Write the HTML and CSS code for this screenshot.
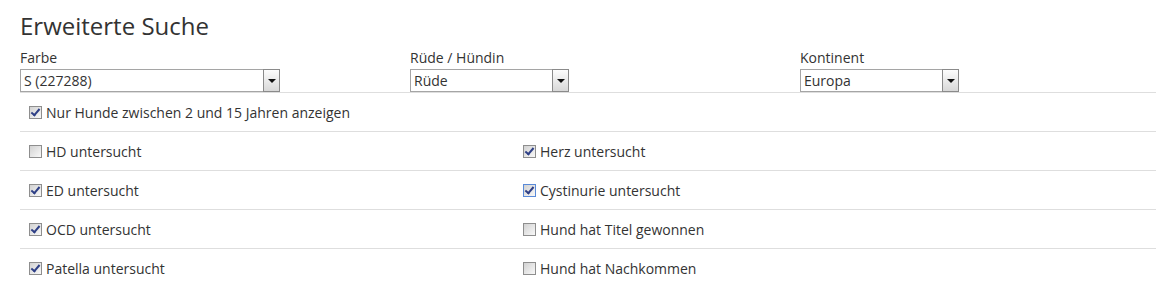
FILE: index.html
```html
<!DOCTYPE html>
<html lang="de">

<head>
    <meta charset="utf-8">
    <meta name="viewport" content="width=device-width, initial-scale=1">
    <title>Erweiterte Suche</title>
    <link rel="stylesheet" href="styles.css">
</head>

<body>
    <div class="search">
        <h1>Erweiterte Suche</h1>

        <div class="fields">
            <div class="field">
                <label>Farbe</label>
                <div class="select wide">
                    <span class="value">S (227288)</span>
                    <span class="arrow"></span>
                </div>
            </div>
            <div class="field">
                <label>Rüde / Hündin</label>
                <div class="select">
                    <span class="value">Rüde</span>
                    <span class="arrow"></span>
                </div>
            </div>
            <div class="field">
                <label>Kontinent</label>
                <div class="select">
                    <span class="value">Europa</span>
                    <span class="arrow"></span>
                </div>
            </div>
        </div>

        <div class="row">
            <div class="check"><span class="box checked"></span>Nur Hunde zwischen 2 und 15 Jahren anzeigen</div>
        </div>
        <div class="row">
            <div class="check"><span class="box"></span>HD untersucht</div>
            <div class="check"><span class="box checked"></span>Herz untersucht</div>
        </div>
        <div class="row">
            <div class="check"><span class="box checked"></span>ED untersucht</div>
            <div class="check"><span class="box checked focus"></span>Cystinurie untersucht</div>
        </div>
        <div class="row">
            <div class="check"><span class="box checked"></span>OCD untersucht</div>
            <div class="check"><span class="box"></span>Hund hat Titel gewonnen</div>
        </div>
        <div class="row">
            <div class="check"><span class="box checked"></span>Patella untersucht</div>
            <div class="check"><span class="box"></span>Hund hat Nachkommen</div>
        </div>
    </div>
</body>

</html>
```

FILE: styles.css
```css
body {
    font-family: 'Open Sans', 'Noto Sans', sans-serif;
    color: #333;
    background-color: white;
    margin: 0;
    padding: 0;
}

.search {
    padding-left: 20px;
}

h1 {
    font-size: 24px;
    line-height: 28px;
    font-weight: normal;
    margin: 12px 0 0;
}

.fields {
    display: grid;
    grid-template-columns: 390px 390px auto;
    margin-top: 9px;
}

.field label {
    display: block;
    font-size: 14px;
    line-height: 18px;
    margin-bottom: 2px;
}

.select {
    display: flex;
    width: 157px;
    height: 21px;
    border: 1px solid #a5a5a5;
    font-size: 14px;
    line-height: 21px;
}

.select.wide {
    width: 258px;
}

.select .value {
    flex: 1;
    padding-left: 3px;
}

.select .arrow {
    width: 15px;
    border: 1px solid #8a8a8a;
    margin: -1px -1px -1px 0;
    background: linear-gradient(#fdfdfd, #d8d8d8);
    display: flex;
    align-items: center;
    justify-content: center;
}

.select .arrow::after {
    content: "";
    border-left: 4px solid transparent;
    border-right: 4px solid transparent;
    border-top: 4px solid #111;
    margin-top: 1px;
}

.row {
    display: grid;
    grid-template-columns: 494px auto;
    height: 38px;
    border-top: 1px solid #dedede;
    font-size: 14px;
}

.check {
    display: flex;
    align-items: center;
    padding-left: 9px;
}

.box {
    width: 11px;
    height: 11px;
    border: 1px solid #8e8e8e;
    background: linear-gradient(135deg, #d2d2d2, #f8f8f8);
    margin-right: 4px;
    position: relative;
}

.box.checked::after {
    content: "";
    position: absolute;
    left: 3px;
    top: 0px;
    width: 3px;
    height: 7px;
    border-right: 2px solid #2e3f86;
    border-bottom: 2px solid #2e3f86;
    transform: rotate(40deg);
}

.box.focus {
    border-color: #5a8ad8;
}
```
